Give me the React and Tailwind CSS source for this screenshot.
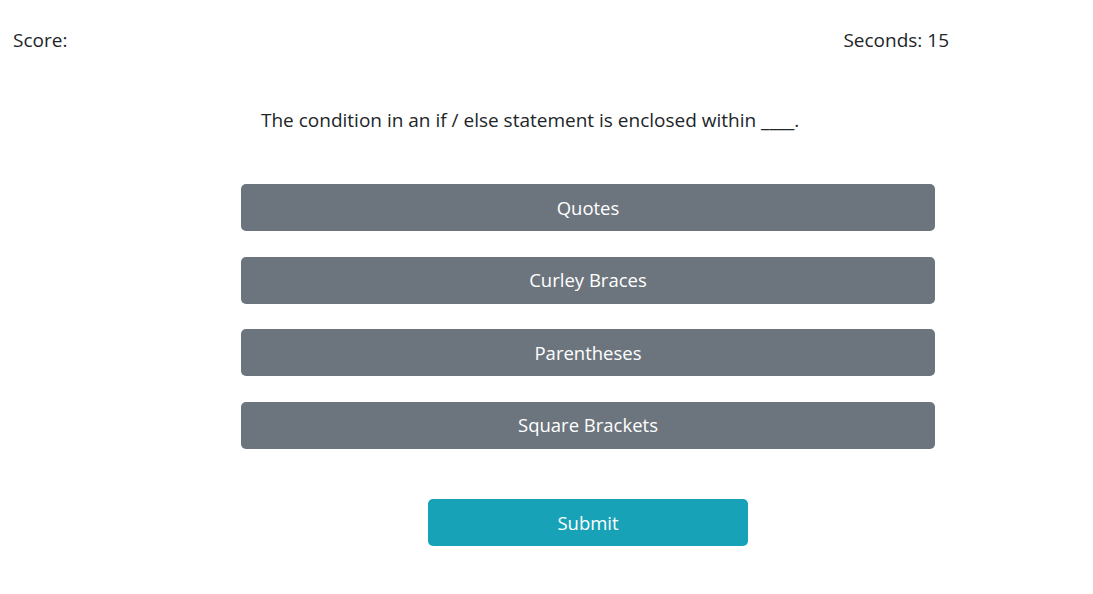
export default function App() {
  const answers = ["Quotes", "Curley Braces", "Parentheses", "Square Brackets"];
  return (
    <div className="min-h-[594px] bg-white text-[#212529] font-['Open_Sans',sans-serif]">
      <div className="flex justify-between pl-[13px] pr-[144px] pt-[26px] text-[19px] leading-[28px]">
        <div>Score:</div>
        <div>Seconds: 15</div>
      </div>
      <div className="pl-[261px] mt-[52px] text-[19px] leading-[28px]">
        The condition in an if / else statement is enclosed within ____.
      </div>
      <div className="ml-[241px] w-[694px] mt-[50px] flex flex-col gap-[25.6px]">
        {answers.map((a) => (
          <button
            key={a}
            className="h-[47px] w-full rounded-[5px] bg-[#6c757d] text-white text-[18.5px] leading-[30px]"
          >
            {a}
          </button>
        ))}
        <div className="flex justify-center mt-[25px]">
          <button className="h-[47px] w-[320px] rounded-[5px] bg-[#17a2b8] text-white text-[18.5px] leading-[30px]">
            Submit
          </button>
        </div>
      </div>
    </div>
  );
}
